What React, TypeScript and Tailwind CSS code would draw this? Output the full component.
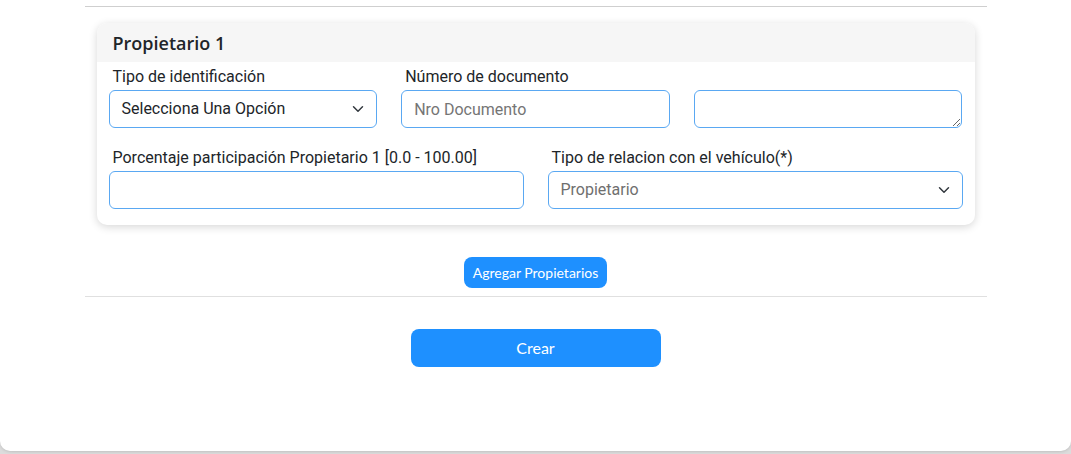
// ── Small form pieces ──────────────────────────────────────────────────────

const fieldBox =
  'h-[38px] w-full rounded-[6px] border border-[#5aa8f2] bg-white px-3 text-[16px] text-[#212529] outline-none';

function Label({ children }: { children: React.ReactNode }) {
  return <label className="block h-6 mb-[1px] px-1 text-[16px] leading-6 text-[#212529]">{children}</label>;
}

function SelectBox({ value, muted }: { value: string; muted?: boolean }) {
  return (
    <div className={`${fieldBox} flex items-center justify-between`}>
      <span className={muted ? 'text-[#6f6f6f]' : 'text-[#212529]'}>{value}</span>
      <svg viewBox="0 0 16 16" className="h-[12px] w-[16px] mr-[-2px]" fill="none">
        <path d="M2 5l6 6 6-6" stroke="#343a40" strokeWidth="2" strokeLinecap="round" strokeLinejoin="round" />
      </svg>
    </div>
  );
}

export default function App() {
  return (
    <div className="min-h-[454px] bg-[#dcdcdc]" style={{ fontFamily: 'Roboto, "Liberation Sans", sans-serif' }}>
      <div className="h-[451px] bg-white rounded-b-[10px] pt-[6px] shadow-[0_1px_3px_rgba(0,0,0,0.12)]">
        <div className="mx-auto w-[902px]">
          <hr className="border-0 border-t border-[#cfcfcf]" />

          {/* Owner card */}
          <div className="mx-3 mt-4 rounded-[10px] bg-white shadow-[0_2px_8px_rgba(0,0,0,0.16)] overflow-hidden">
            <div className="h-[39px] bg-[#f6f6f6] px-4 pt-[2px] flex items-center">
              <h2
                className="text-[18px] font-semibold text-[#212529]"
                style={{ fontFamily: '"Open Sans", Lato, sans-serif' }}
              >
                Propietario 1
              </h2>
            </div>
            <div className="px-3 pb-4">
              <div className="grid grid-cols-3 gap-x-6 pt-[3px]">
                <div>
                  <Label>Tipo de identificación</Label>
                  <SelectBox value="Selecciona Una Opción" />
                </div>
                <div>
                  <Label>Número de documento</Label>
                  <input className={`${fieldBox} placeholder:text-[#757575]`} placeholder="Nro Documento" />
                </div>
                <div className="pt-[25px]">
                  <textarea className={`${fieldBox} block py-1 resize-y`} rows={1} />
                </div>
              </div>
              <div className="grid grid-cols-2 gap-x-6 mt-[18px]">
                <div>
                  <Label>Porcentaje participación Propietario 1 [0.0 - 100.00]</Label>
                  <input className={fieldBox} />
                </div>
                <div>
                  <Label>Tipo de relacion con el vehículo(*)</Label>
                  <SelectBox value="Propietario" muted />
                </div>
              </div>
            </div>
          </div>

          {/* Actions */}
          <div className="flex justify-center mt-8">
            <button
              className="h-[31px] px-[9px] rounded-[8px] bg-[#1e90ff] text-white text-[14px]"
              style={{ fontFamily: 'Lato, "Open Sans", sans-serif' }}
            >
              Agregar Propietarios
            </button>
          </div>
          <hr className="mt-2 border-0 border-t border-[#e0e0e0]" />
          <div className="flex justify-center mt-8">
            <button
              className="h-[38px] w-[250px] rounded-[8px] bg-[#1e90ff] text-white text-[16px]"
              style={{ fontFamily: 'Lato, "Open Sans", sans-serif' }}
            >
              Crear
            </button>
          </div>
        </div>
      </div>
    </div>
  );
}
